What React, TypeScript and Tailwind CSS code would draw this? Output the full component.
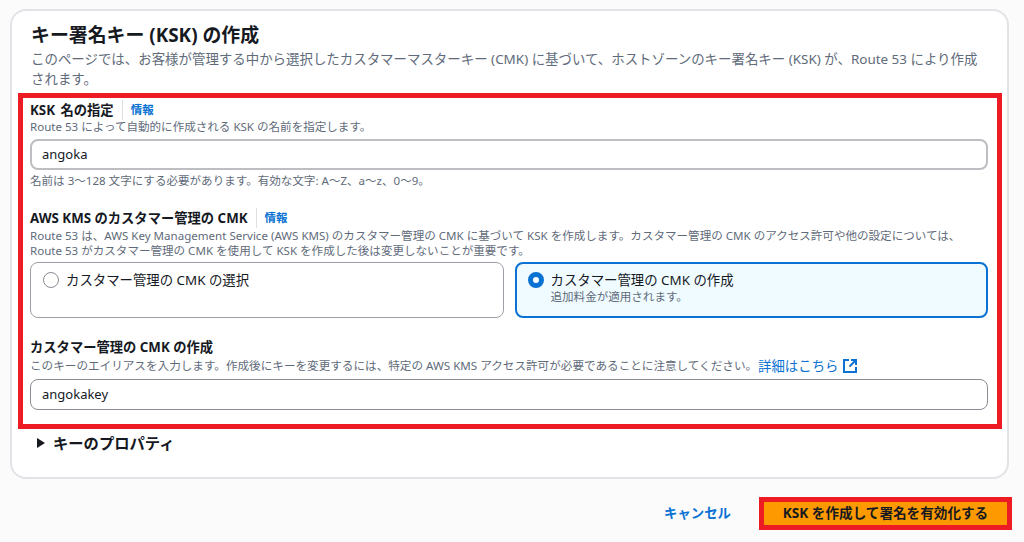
const font = { fontFamily: '"Noto Sans", "Noto Sans CJK JP", sans-serif' };

function FieldLabel({ text, info, wide }: { text: string; info?: boolean; wide?: boolean }) {
  return (
    <div className="flex h-[20px] items-center text-[13.3px] font-bold leading-[18px] text-[#16191f]">
      <span className={wide ? '[word-spacing:2px]' : ''}>{text}</span>
      {info && (
        <span className="ml-[8px] border-l border-[#dcdfe4] pl-[8px] text-[11.5px] font-bold leading-[20px] text-[#0972d3]">情報</span>
      )}
    </div>
  );
}

function TextField({ value, dark }: { value: string; dark?: boolean }) {
  return (
    <div className={`flex h-[31px] items-center rounded-[8px] bg-white text-[13px] text-[#16191f] ${dark ? 'border border-[#8c8c94] pl-[11px]' : 'border-2 border-[#bcbec2] pl-[10px]'}`}>
      {value}
    </div>
  );
}

function ExternalIcon() {
  return (
    <svg className="ml-[5px] text-[#0972d3]" width="14" height="14" viewBox="0 0 14 14" fill="none" stroke="currentColor" strokeWidth="2">
      <path d="M6 1H1v12h12V8" />
      <path d="M8 1h5v5" />
      <path d="M13 1L6.5 7.5" />
    </svg>
  );
}

export default function App() {
  return (
    <div className="h-[542px] w-[1024px] overflow-hidden bg-[#fbfbfb] pl-[10px] pr-[15px] pt-[9px]" style={font}>
      <div className="h-[470px] rounded-[16px] border-2 border-[#e2e3e7] bg-white pl-[6px] pr-[5px]">
        <div className="pl-[13px] pr-[18px] pt-[12px]">
          <h1 className="text-[18.9px] font-bold leading-[24px] text-[#16191f]">キー署名キー (KSK) の作成</h1>
          <p className="mt-[2px] text-[13.45px] leading-[20px] text-[#5f6b7a]">
            このページでは、お客様が管理する中から選択したカスタマーマスターキー (CMK) に基づいて、ホストゾーンのキー署名キー (KSK) が、Route 53 により作成されます。
          </p>
        </div>
        <div className="mt-[4px] h-[336px] border-[5px] border-[#ed1c24] pl-[7px] pr-[9px] pt-[2px]">
          <FieldLabel text="KSK 名の指定" info wide />
          <p className="mt-[-1px] text-[11.55px] leading-[16px] text-[#5f6b7a]">Route 53 によって自動的に作成される KSK の名前を指定します。</p>
          <div className="mt-[4px]">
            <TextField value="angoka" />
          </div>
          <p className="mt-[3px] text-[11.55px] leading-[16px] text-[#5f6b7a]">名前は 3〜128 文字にする必要があります。有効な文字: A〜Z、a〜z、0〜9。</p>

          <div className="mt-[19px]">
            <FieldLabel text="AWS KMS のカスタマー管理の CMK" info />
          </div>
          <p className="text-[11.55px] leading-[15px] text-[#5f6b7a]">
            Route 53 は、AWS Key Management Service (AWS KMS) のカスタマー管理の CMK に基づいて KSK を作成します。カスタマー管理の CMK のアクセス許可や他の設定については、Route 53 がカスタマー管理の CMK を使用して KSK を作成した後は変更しないことが重要です。
          </p>
          <div className="mt-[4px] grid grid-cols-2 gap-[11px]">
            <div className="flex h-[56px] gap-[7px] rounded-[8px] border border-[#9ba0a6] bg-white pl-[12px] pt-[8px]">
              <span className="mt-[1px] h-[16px] w-[16px] rounded-full border border-[#8c8c94]" />
              <span className="text-[13.4px] leading-[18px] text-[#16191f]">カスタマー管理の CMK の選択</span>
            </div>
            <div className="flex h-[56px] gap-[7px] rounded-[8px] border-2 border-[#0972d3] bg-[#f0fbff] pl-[11px] pt-[7px]">
              <span className="mt-[1px] h-[16px] w-[16px] rounded-full border-[5px] border-[#0972d3] bg-white" />
              <div>
                <div className="text-[13.4px] leading-[18px] text-[#16191f]">カスタマー管理の CMK の作成</div>
                <div className="text-[11.55px] leading-[15px] text-[#5f6b7a]">追加料金が適用されます。</div>
              </div>
            </div>
          </div>

          <div className="mt-[19px]">
            <FieldLabel text="カスタマー管理の CMK の作成" />
          </div>
          <div className="mt-[1px] flex h-[16px] items-center whitespace-nowrap text-[11.6px] leading-[16px] text-[#5f6b7a]">
            <span>このキーのエイリアスを入力します。作成後にキーを変更するには、特定の AWS KMS アクセス許可が必要であることに注意してください。</span>
            <span className="ml-[1px] text-[13.4px] text-[#0972d3]">詳細はこちら</span>
            <ExternalIcon />
          </div>
          <div className="mt-[5px]">
            <TextField value="angokakey" dark />
          </div>
        </div>
        <div className="flex items-center gap-[8px] pl-[19px] pt-[4px]">
          <span className="h-0 w-0 border-y-[5px] border-l-[8px] border-y-transparent border-l-[#16191f]" />
          <span className="text-[15.3px] font-bold leading-[20px] text-[#16191f]">キーのプロパティ</span>
        </div>
      </div>
      <div className="-mr-[3px] mt-[18px] flex items-center justify-end">
        <span className="mr-[28px] text-[13.4px] font-bold text-[#0972d3]">キャンセル</span>
        <div className="flex h-[33px] w-[253px] items-center justify-center border-[5px] border-[#ed1c24] bg-[#ff9900] text-[13.6px] font-bold text-[#16191f]">
          KSK を作成して署名を有効化する
        </div>
      </div>
    </div>
  );
}
